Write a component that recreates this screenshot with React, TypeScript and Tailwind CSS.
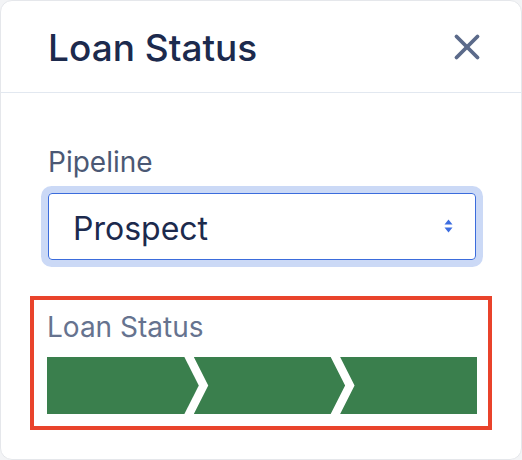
import { X } from 'lucide-react'

function StatusBar() {
  // three chevron steps, all completed
  return (
    <svg className="block w-full h-[57px]" viewBox="0 0 432 57" preserveAspectRatio="none">
      <polygon points="0,0 138,0 152.5,28.5 138,57 0,57" fill="#3a7f4d" />
      <polygon points="147.5,0 285,0 299.5,28.5 285,57 147.5,57 162,28.5" fill="#3a7f4d" />
      <polygon points="294.5,0 432,0 432,57 294.5,57 309,28.5" fill="#3a7f4d" />
    </svg>
  )
}

export default function App() {
  return (
    <div className="h-[460px] w-[522px] bg-[#f3f4f6]" style={{ fontFamily: 'Inter, "Noto Sans", sans-serif' }}>
      <div className="h-full w-full rounded-[12px] border border-[#e5e7eb] bg-white overflow-hidden">
        {/* Header */}
        <div className="flex h-[92px] items-center justify-between border-b border-[#e2e8f0] pl-[47px] pr-[33px]">
          <h2 className="pt-[2px] text-[37px] font-medium leading-none text-[#1c2a4d]">Loan Status</h2>
          <button className="text-[#5b6a8a]" aria-label="Close">
            <X size={42} strokeWidth={2.2} />
          </button>
        </div>

        {/* Body */}
        <div className="pl-[47px] pr-[45px] pt-[51px]">
          <label className="block text-[28px] leading-[36px] text-[#4b5874]">Pipeline</label>
          <div className="mt-[13px] flex h-[67px] items-center justify-between rounded-[4px] border-[1.5px] border-[#3b6cdc] pl-[24px] pr-[22px] pt-[4px] shadow-[0_0_0_7px_#cbd9f6]">
            <span className="text-[32px] leading-none text-[#1c2a4d]">Prospect</span>
            <svg width="9" height="15" viewBox="0 0 9 15" className="-mt-[4px]">
              <path d="M4.5 0.5 L8.5 5.5 L0.5 5.5 Z" fill="#3c6de0" />
              <path d="M0.5 8.5 L8.5 8.5 L4.5 13.5 Z" fill="#3c6de0" />
            </svg>
          </div>

          <div className="-ml-[18px] -mr-[16px] mt-[36px] border-4 border-[#e9432b] pb-[12px] pl-[13px] pr-[11px] pt-[9px]">
            <div className="text-[28px] leading-[36px] text-[#66738f]">Loan Status</div>
            <div className="mt-[12px]">
              <StatusBar />
            </div>
          </div>
        </div>
      </div>
    </div>
  )
}
